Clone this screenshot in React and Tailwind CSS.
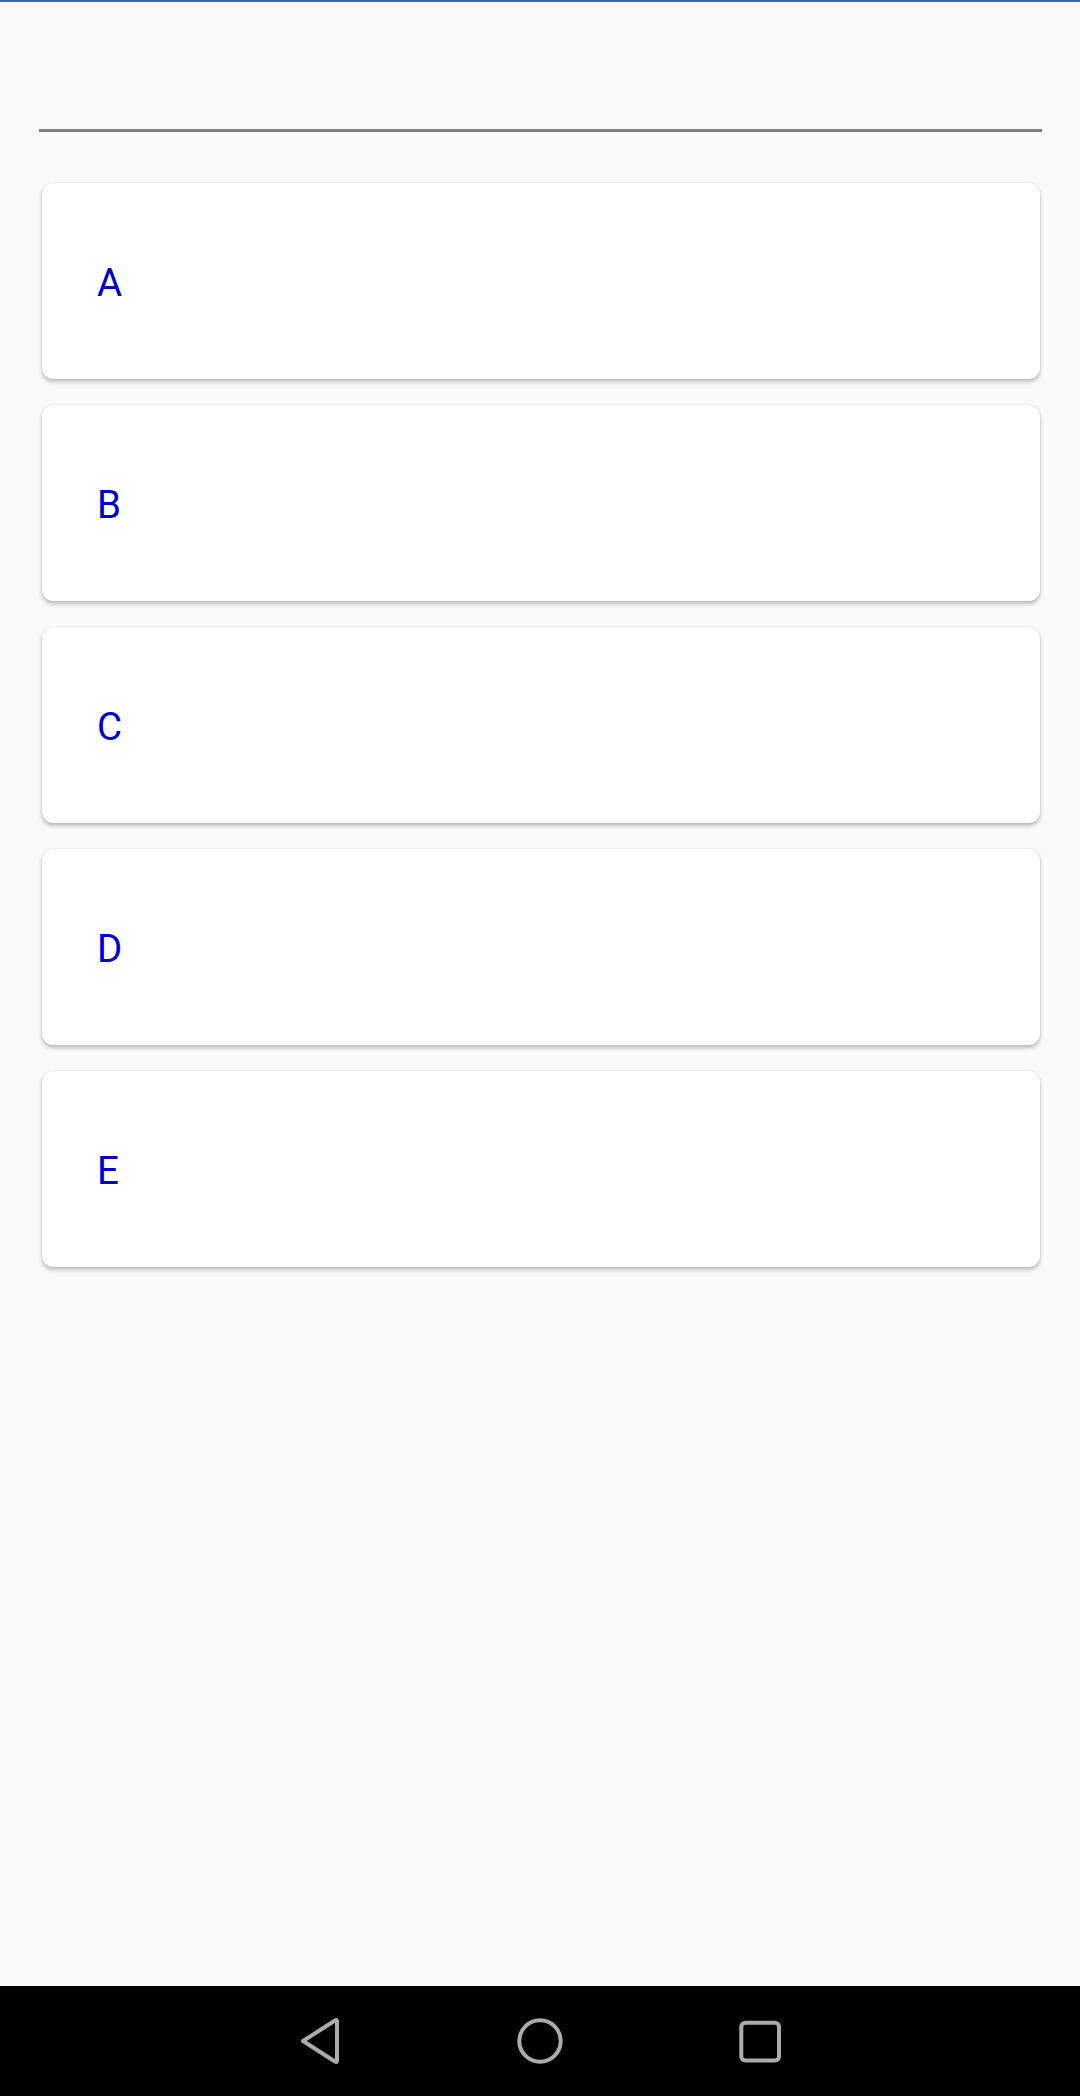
import React from 'react';

const options = ['A', 'B', 'C', 'D', 'E'];

const NavBar = () => (
  <div className="h-[110px] bg-black shrink-0">
    <svg width="1080" height="110" viewBox="0 0 1080 110" className="block">
      <g fill="none" stroke="#ababab" strokeWidth="4" strokeLinejoin="round" strokeLinecap="round">
        {/* back */}
        <path d="M303 55 L335 34.5 Q337 33.3 337 35.5 L337 74.5 Q337 76.7 335 75.5 Z" />
        {/* home */}
        <circle cx="540" cy="55" r="20.7" />
        {/* recents */}
        <rect x="741.3" y="36.7" width="37.7" height="37.7" rx="4" />
      </g>
    </svg>
  </div>
);

export default function App() {
  return (
    <div className="h-[2096px] flex flex-col bg-[#fafafa]" style={{ fontFamily: 'Roboto, "Noto Sans", sans-serif' }}>
      <div className="h-[2px] bg-[#1f74c9] shrink-0" />

      <div className="flex-1 flex flex-col">
        {/* input underline */}
        <div className="mt-[127px] ml-[39px] mr-[38px] h-[3px] bg-[#808080]" />

        <div className="mt-[51px] ml-[42px] mr-[40px] flex flex-col gap-[26px]">
          {options.map((opt) => (
            <div
              key={opt}
              className="h-[196px] bg-white rounded-[11px] flex items-center pl-[55px] shadow-[0_3px_4px_rgba(0,0,0,0.24),0_0_1.5px_rgba(0,0,0,0.2)]"
            >
              <span className="mt-[5px] text-[38.5px] leading-none text-[#0000cc]">{opt}</span>
            </div>
          ))}
        </div>
      </div>

      <NavBar />
    </div>
  );
}
